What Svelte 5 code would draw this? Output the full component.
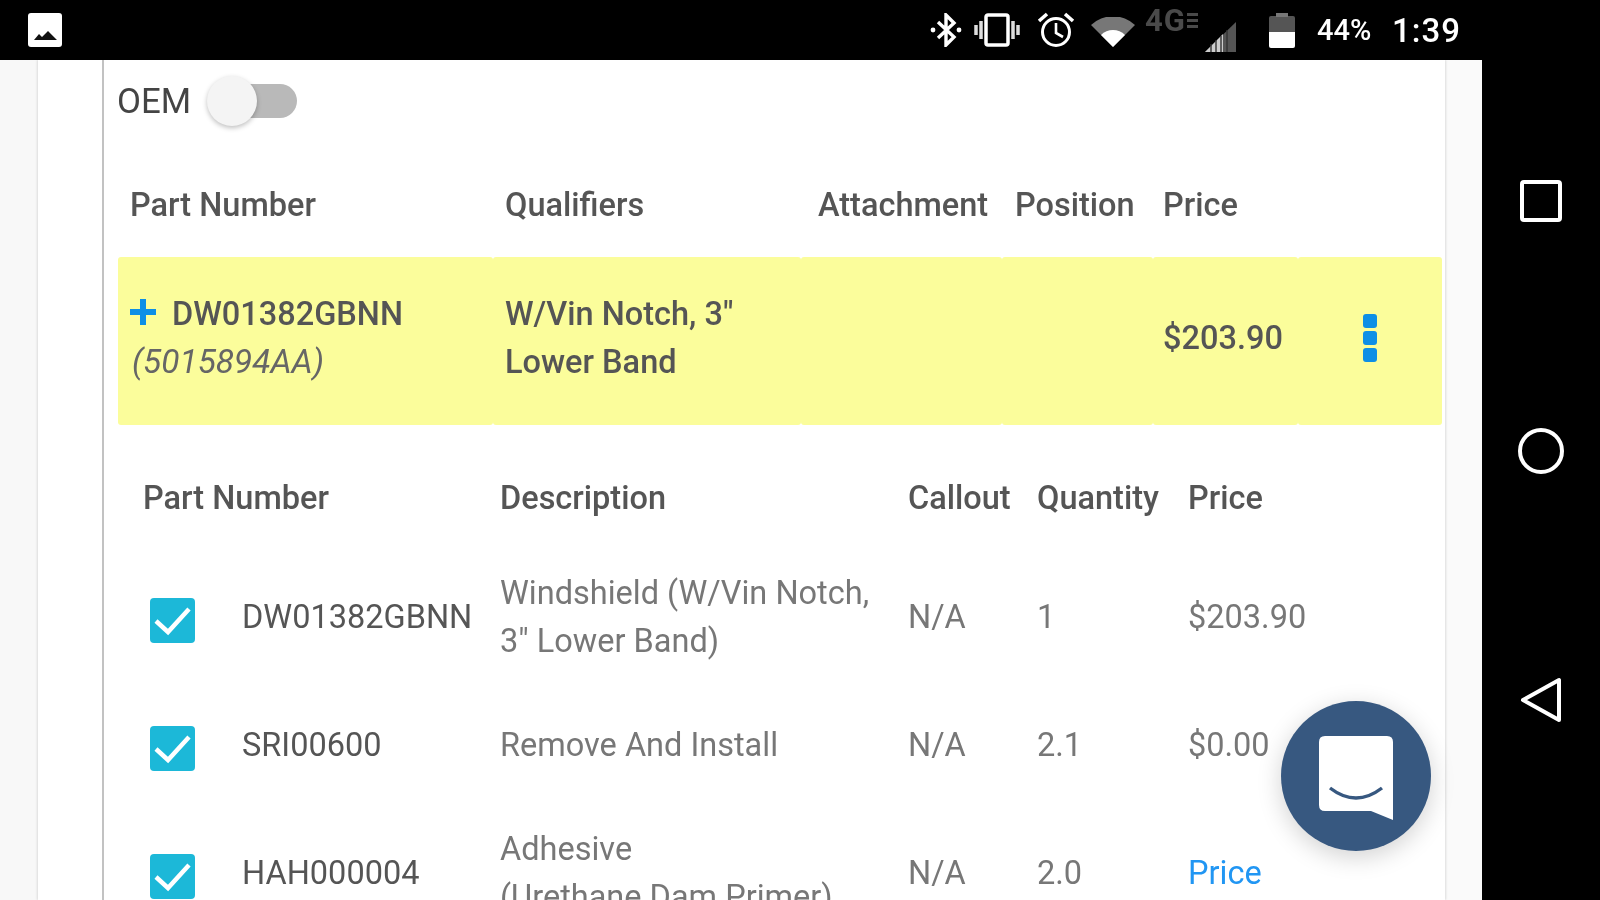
<script>
  const parts = [
    { num: 'DW01382GBNN', desc: ['Windshield (W/Vin Notch,', '3" Lower Band)'], callout: 'N/A', qty: '1', price: '$203.90' },
    { num: 'SRI00600', desc: ['Remove And Install'], callout: 'N/A', qty: '2.1', price: '$0.00' },
    { num: 'HAH000004', desc: ['Adhesive', '(Urethane Dam Primer)'], callout: 'N/A', qty: '2.0', price: 'Price', link: true }
  ];
</script>

<div class="screen">
  <header class="status">
    <svg class="pic" viewBox="0 0 34 34" width="34" height="34">
      <rect x="0" y="0" width="34" height="34" rx="3" fill="#fff" />
      <path d="M6 27 L11 21 L14 24 L20 18 L29 27 Z" fill="#111" />
    </svg>
    <div class="tray">
      <svg class="bt" viewBox="0 0 32 34" width="32" height="34" fill="none" stroke="#fff" stroke-width="3.4">
        <path d="M8 9 L24 24 L16 32 V2 L24 10 L8 25" />
        <circle cx="3" cy="17" r="2.4" fill="#fff" stroke="none" />
        <circle cx="29" cy="17" r="2.4" fill="#fff" stroke="none" />
      </svg>
      <svg class="vib" viewBox="0 0 48 34" width="48" height="34" fill="none" stroke="#fff">
        <rect x="13" y="2" width="22" height="30" rx="2" stroke-width="3.5" />
        <path d="M8 8 V26 M3 12 V22 M40 8 V26 M45 12 V22" stroke-width="3.5" stroke="#ddd" />
      </svg>
      <svg class="alarm" viewBox="0 0 38 36" width="38" height="36" fill="none" stroke="#fff" stroke-width="3">
        <circle cx="19" cy="20" r="13.5" />
        <path d="M19 11 V21 L26 25" stroke-width="2.6" />
        <path d="M2 9 L10 2 M36 9 L28 2" stroke-width="3.6" />
      </svg>
      <svg class="wifi" viewBox="0 0 44 30" width="44" height="30">
        <path d="M0 8 A32 32 0 0 1 44 8 L22 30 Z" fill="#777" />
        <path d="M10 18 A17 17 0 0 1 34 18 L22 30 Z" fill="#fff" />
      </svg>
      <div class="net">
        <span class="lte">4G</span>
        <span class="lines"><i></i><i></i><i></i></span>
        <svg class="signal" viewBox="0 0 31 30" width="31" height="30">
          <path d="M0 30 L31 0 V30 Z" fill="#555" />
          <path d="M0 30 L18 12 V30 Z" fill="#ccc" />
          <path d="M6 22 V30 M11 18 V30 M16 14 V30 M22 8 V30" stroke="#333" stroke-width="1.4" />
        </svg>
      </div>
      <div class="battery"><span class="cap"></span></div>
      <span class="pct">44%</span>
      <span class="clock">1:39</span>
    </div>
  </header>

  <div class="content">
    <main class="page">
      <div class="gutter"></div>
      <section class="card">
        <div class="oem">
          <span class="oem-label">OEM</span>
          <span class="toggle"><span class="track"></span><span class="knob"></span></span>
        </div>

        <div class="vehicle-grid head">
          <div>Part Number</div>
          <div>Qualifiers</div>
          <div class="att">Attachment</div>
          <div class="pos">Position</div>
          <div class="pr">Price</div>
          <div></div>
        </div>

        <div class="vehicle-grid selected">
          <div class="cell-y first">
            <div class="line"><span class="plus"></span><b>DW01382GBNN</b></div>
            <div class="line"><em>(5015894AA)</em></div>
          </div>
          <div class="cell-y">
            <div class="line"><b>W/Vin Notch, 3"</b></div>
            <div class="line"><b>Lower Band</b></div>
          </div>
          <div class="cell-y"></div>
          <div class="cell-y"></div>
          <div class="cell-y pr"><b>$203.90</b></div>
          <div class="cell-y dots-cell"><span class="dots"><i></i><i></i><i></i></span></div>
        </div>

        <div class="items-grid head second">
          <div>Part Number</div>
          <div>Description</div>
          <div>Callout</div>
          <div>Quantity</div>
          <div>Price</div>
        </div>

        {#each parts as p}
          <div class="items-grid row">
            <div class="part">
              <span class="check">
                <svg viewBox="0 0 45 45" width="45" height="45" fill="none" stroke="#fff" stroke-width="4.5">
                  <path d="M6 23 L18 34 L39 11" />
                </svg>
              </span>
              <span>{p.num}</span>
            </div>
            <div class="desc">
              {#each p.desc as d}<div class="line">{d}</div>{/each}
            </div>
            <div>{p.callout}</div>
            <div>{p.qty}</div>
            <div class:link={p.link}>{p.price}</div>
          </div>
        {/each}
      </section>
      <div class="right-gutter"></div>

      <button class="fab" aria-label="Chat">
        <svg viewBox="0 0 74 84" width="74" height="84">
          <path d="M6 0 H68 Q74 0 74 6 V84 L52 75 H6 Q0 75 0 69 V6 Q0 0 6 0 Z" fill="#fff" />
          <path d="M11 52 Q37 72 63 52" fill="none" stroke="#375880" stroke-width="3.4" />
        </svg>
      </button>
    </main>

    <nav class="nav">
      <svg viewBox="0 0 42 42" width="42" height="42" fill="none" stroke="#fff" stroke-width="4">
        <rect x="2" y="2" width="38" height="38" rx="2" />
      </svg>
      <svg viewBox="0 0 46 46" width="46" height="46" fill="none" stroke="#fff" stroke-width="4">
        <circle cx="23" cy="23" r="21" />
      </svg>
      <svg class="back" viewBox="0 0 42 46" width="42" height="46" fill="none" stroke="#fff" stroke-width="4" stroke-linejoin="round">
        <path d="M39 3 V43 L3 23 Z" />
      </svg>
    </nav>
  </div>
</div>

<style>
  :global(body) { margin: 0; background: #000; }
  .screen {
    width: 1600px; height: 900px; overflow: hidden; display: flex; flex-direction: column;
    background: #000; font-family: Roboto, "Liberation Sans", sans-serif; font-size: 32.5px; color: #666;
    filter: blur(0.7px);
  }
  .status { height: 60px; flex: none; display: flex; align-items: center; justify-content: space-between; padding: 0 139px 0 28px; box-sizing: border-box; }
  .pic { margin-top: -1px; }
  .tray { display: flex; align-items: center; }
  .bt { margin-right: 11px; }
  .vib { margin-right: 16px; }
  .alarm { margin-right: 16px; }
  .wifi { margin-right: 10px; margin-top: 4px; }
  .net { width: 91px; height: 44px; display: flex; align-items: flex-start; position: relative; }
  .lte { font-size: 31px; font-weight: 700; color: #4a4a4a; line-height: 26px; letter-spacing: 1px; }
  .lines { display: flex; flex-direction: column; gap: 3px; margin: 5px 0 0 1px; }
  .lines i { display: block; width: 11px; height: 3px; background: #4a4a4a; }
  .signal { position: absolute; right: 0; bottom: 0; }
  .battery { width: 26px; height: 32px; margin-top: 3px; margin-left: 33px; margin-right: 22px; position: relative; display: flex; justify-content: center; background: linear-gradient(#555 0 50%, #fff 50% 100%); border-radius: 2px; }
  .cap { position: absolute; top: -3px; width: 12px; height: 4px; background: #777; }
  .pct { color: #fff; font-size: 29px; font-weight: 500; margin-right: 20px; width: 55px; white-space: nowrap; }
  .clock { color: #fff; font-size: 33px; font-weight: 500; letter-spacing: 1px; white-space: nowrap; }

  .content { flex: 1; display: flex; min-height: 0; }
  .page { width: 1482px; flex: none; display: flex; position: relative; background: #fafafa; overflow: hidden; }
  .gutter { width: 38px; flex: none; background: #f8f8f8; }
  .card { width: 1407px; flex: none; box-sizing: border-box; padding-left: 64px; box-shadow: 1px 0 2px #ddd, -1px 0 2px #ddd; background: linear-gradient(90deg, #fff 64px, #c2c2c2 64px 66.5px, #fff 66.5px); }
  .right-gutter { flex: 1; }

  .oem { height: 82px; display: flex; align-items: center; padding-left: 15px; box-sizing: border-box; color: #444; }
  .oem-label { width: 73px; font-size: 34.8px; }
  .toggle { display: block; position: relative; width: 90px; height: 50px; margin-left: 17px; }
  .track { position: absolute; left: 10px; right: 0; top: 8px; height: 34px; border-radius: 17px; background: #b9b9b9; }
  .knob { position: absolute; left: 0; top: 0; width: 50px; height: 50px; border-radius: 50%; background: #f4f4f4; box-shadow: 0 2px 5px rgba(0,0,0,.25); }

  .vehicle-grid { display: grid; grid-template-columns: 375px 308px 201px 151px 145px 144px; margin-left: 16px; width: 1324px; }
  .items-grid { display: grid; align-items: center; }
  .head { font-weight: 500; color: #555; align-items: center; box-sizing: border-box; }
  .vehicle-grid.head { height: 115px; padding-top: 10px; }
  .vehicle-grid.head > div { padding-left: 12px; }
  .vehicle-grid.head .att { padding-left: 17px; }
  .vehicle-grid.head .pos { padding-left: 13px; }
  .vehicle-grid.head .pr { padding-left: 10px; }
  .selected { height: 168px; }
  .cell-y { background: #fbfd9b; border-radius: 3px; padding: 0 0 6px 12px; display: flex; flex-direction: column; justify-content: center; color: #555; }
  .cell-y b { font-weight: 500; }
  .vehicle-grid.selected .pr { padding-left: 10px; }
  .line { line-height: 48px; white-space: nowrap; }
  .first em { margin-left: 2px; color: #666; font-size: 33.4px; }
  .plus { display: inline-block; width: 26px; height: 26px; margin-right: 16px; vertical-align: 0; background: linear-gradient(#0d8fe6, #0d8fe6) center/100% 6px no-repeat, linear-gradient(#0d8fe6, #0d8fe6) center/6px 100% no-repeat; }
  .dots-cell { align-items: center; padding-left: 0; padding-right: 0; }
  .dots { display: flex; flex-direction: column; gap: 3px; }
  .dots i { display: block; width: 14px; height: 14px; border-radius: 3px; background: #0d8fe6; }

  .second { margin-left: 41px; width: 1200px; grid-template-columns: 357px 408px 129px 151px 1fr; height: 128px; padding-top: 18px; }
  .row { margin-left: 48px; width: 1200px; grid-template-columns: 350px 408px 129px 151px 1fr; height: 128px; color: #777; }
  .part { display: flex; align-items: center; gap: 47px; color: #555; }
  .check { width: 45px; height: 45px; border-radius: 4px; background: #1cb8d8; display: block; flex: none; margin-top: 6px; }
  .check svg { display: block; }
  .link { color: #2196f3; }

  .fab { position: absolute; left: 1281px; top: 641px; width: 150px; height: 150px; border: 0; padding: 4px 0 0 0; border-radius: 50%; background: #375880; box-shadow: 0 6px 24px rgba(0,0,0,.18); display: flex; align-items: center; justify-content: center; }
  .nav { flex: 1; display: flex; flex-direction: column; align-items: center; padding-top: 120px; gap: 206px; background: #000; box-sizing: border-box; }
  .back { margin-top: -3px; }
</style>
